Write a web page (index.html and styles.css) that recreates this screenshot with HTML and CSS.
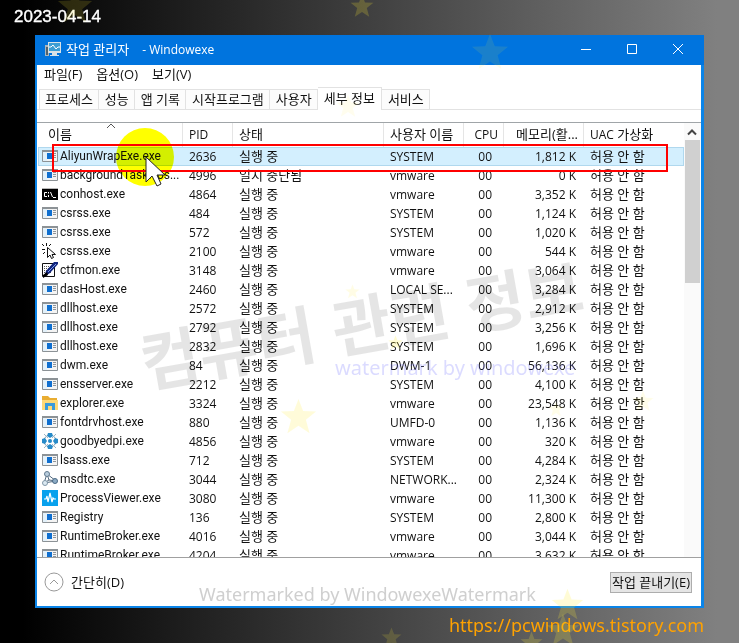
FILE: index.html
```html
<!DOCTYPE html>
<html lang="ko">
<head>
<meta charset="utf-8">
<meta name="viewport" content="width=device-width, initial-scale=1">
<title>작업 관리자 - Windowexe</title>
<link rel="stylesheet" href="styles.css">
</head>
<body>
<svg class="defs" aria-hidden="true">
  <symbol id="i-app" viewBox="0 0 16 16"><path fill="#f4f4f4" stroke="#8c9296" d="M.5 2.500h15v11H.5z"/><path fill="#8c9296" d="M0 2h16v2H0z"/><path fill="#e3f1fa" d="M1 4h4v9H1z"/><path fill="#0f6fd0" d="M5 5h5v6H5z"/><path stroke="#8f9499" d="M11 5.500h3M11 7.500h3M11 9.500h3"/></symbol>
  <symbol id="i-cmd" viewBox="0 0 16 16"><path fill="#000" d="M0 2h16v12H0z"/><path fill="#b8b8b8" d="M0 2h16v1H0z"/><path fill="none" stroke="#fff" d="M5 6.500H2.500v4H5M6.500 6v1.500M6.500 9v2M8.500 6l2 5M11 11.500h3"/></symbol>
  <symbol id="i-click" viewBox="0 0 16 16"><path fill="none" stroke="#111" d="M0 1l2 2M4.500 0v3M9 1L7 3M0 6.500h3M1 11l2-2"/><path fill="#fff" stroke="#111" d="M5.500 4.500v10l2.500-2.500 1.500 3.500 2-1L10 11.500h3.500z"/></symbol>
  <symbol id="i-pen" viewBox="0 0 16 16"><path fill="#fff" stroke="#111" d="M.5 1.500h12v13H.5z"/><path stroke="#555" stroke-dasharray="1 1" d="M2 4.500h8M2 6.500h8M2 8.500h8M2 10.500h8"/><path fill="#12257f" d="M12 0h4v2l-8 9-6 4 2-6z"/><path stroke="#7b9be8" d="M14 2L6 10"/><path fill="#000" d="M1 13l4-3 1 3-5 3z"/></symbol>
  <symbol id="i-folder" viewBox="0 0 16 16"><path fill="#e9ad32" d="M0 1h6l2 2h7v4H0z"/><path fill="#ffd978" d="M0 5h16v10H0z"/><path fill="#3c9bdc" d="M3 8h10v7h-3v-4H6v4H3z"/></symbol>
  <symbol id="i-gear" viewBox="0 0 16 16"><circle cx="8" cy="8" r="6" fill="none" stroke="#7f9caf"/><path fill="#278bc9" d="M6 0h4l1 3-3 2-3-2zM6 16h4l1-3-3-2-3 2zM0 6v4l3 1 2-3-2-3zM16 6v4l-3 1-2-3 2-3z"/><circle cx="8" cy="8" r="2" fill="#278bc9"/><path fill="none" stroke="#9eb6c5" d="M2 1l4 4M14 1l-4 4M2 15l4-4M14 15l-4-4"/></symbol>
  <symbol id="i-net" viewBox="0 0 16 16"><path fill="none" stroke="#536a80" d="M5 3l-3 9 12-2zM5 3l2 6-5 3M7 9l7 1"/><circle cx="5" cy="3" r="2.500" fill="#b9cddd" stroke="#61798e"/><circle cx="3" cy="12" r="2.500" fill="#dbe9f2" stroke="#8097a8"/><circle cx="13" cy="10" r="2.500" fill="#8cabc5" stroke="#4c6a85"/></symbol>
  <symbol id="i-pulse" viewBox="0 0 16 16"><path fill="#08a1ed" d="M0 0h16v16H0z"/><path fill="none" stroke="#fff" stroke-width="1.200" d="M2 9h2l1-3 1 6 2-9 2 9 1-4 1 1h2"/></symbol>
  <symbol id="star" viewBox="0 0 40 40"><path d="M20 1l5 13 14 .5-11 9 4 14.500-12-8-12 8 4-14.500-11-9 14-.5z"/></symbol>
</svg>

<p class="date">2023-04-14</p>

<main class="window">
  <header class="titlebar">
    <svg class="logo" viewBox="0 0 16 15" aria-hidden="true"><path fill="#a9b6bd" d="M0 3h4v11H0z"/><path fill="#52636d" d="M1 5h2v8H1z"/><path fill="#d9e2e6" d="M3 0h13v11H3zM7 11h5v2h2v1H5v-1h2z"/><path fill="#3c9ed4" d="M4 1h11v8H4z"/><path fill="none" stroke="#fff" d="M4 5h2l2-2 3 4 2-2h2"/></svg>
    <h1>작업 관리자</h1><span class="owner">- Windowexe</span>
    <div class="controls">
      <button aria-label="최소화"><svg viewBox="0 0 10 10"><path d="M0 5.500h10"/></svg></button>
      <button aria-label="최대화"><svg viewBox="0 0 10 10"><path d="M.5.5h9v9h-9z"/></svg></button>
      <button aria-label="닫기"><svg viewBox="0 0 10 10"><path d="M0 0l10 10M10 0L0 10"/></svg></button>
    </div>
  </header>
  <nav class="menu"><button>파일(F)</button><button>옵션(O)</button><button>보기(V)</button></nav>
  <div class="tabs" role="tablist">
    <button role="tab">프로세스</button><button role="tab">성능</button><button role="tab">앱 기록</button><button role="tab">시작프로그램</button><button role="tab">사용자</button><button role="tab" aria-selected="true">세부 정보</button><button role="tab">서비스</button>
  </div>
  <section class="list">
    <div class="rows">
      <table>
        <colgroup><col class="c-name"><col class="c-pid"><col class="c-state"><col class="c-user"><col class="c-cpu"><col class="c-mem"><col></colgroup>
        <thead><tr><th class="sorted">이름<svg class="sort" viewBox="0 0 8 4" aria-hidden="true"><path d="M0 4l4-4 4 4"/></svg></th><th class="en">PID</th><th>상태</th><th>사용자 이름</th><th class="en cpu">CPU</th><th class="mem">메모리(활...</th><th><span class="en">UAC</span> 가상화</th></tr></thead>
        <tbody>
          <tr class="selected"><td><svg><use href="#i-app"/></svg>AliyunWrapExe.exe</td><td>2636</td><td>실행 중</td><td>SYSTEM</td><td>00</td><td>1,812 K</td><td>허용 안 함</td></tr>
          <tr><td><svg><use href="#i-app"/></svg>backgroundTaskHos...</td><td>4996</td><td>일시 중단됨</td><td>vmware</td><td>00</td><td>0 K</td><td>허용 안 함</td></tr>
          <tr><td><svg><use href="#i-cmd"/></svg>conhost.exe</td><td>4864</td><td>실행 중</td><td>vmware</td><td>00</td><td>3,352 K</td><td>허용 안 함</td></tr>
          <tr><td><svg><use href="#i-app"/></svg>csrss.exe</td><td>484</td><td>실행 중</td><td>SYSTEM</td><td>00</td><td>1,124 K</td><td>허용 안 함</td></tr>
          <tr><td><svg><use href="#i-app"/></svg>csrss.exe</td><td>572</td><td>실행 중</td><td>SYSTEM</td><td>00</td><td>1,020 K</td><td>허용 안 함</td></tr>
          <tr><td><svg><use href="#i-click"/></svg>csrss.exe</td><td>2100</td><td>실행 중</td><td>vmware</td><td>00</td><td>544 K</td><td>허용 안 함</td></tr>
          <tr><td><svg><use href="#i-pen"/></svg>ctfmon.exe</td><td>3148</td><td>실행 중</td><td>vmware</td><td>00</td><td>3,064 K</td><td>허용 안 함</td></tr>
          <tr><td><svg><use href="#i-app"/></svg>dasHost.exe</td><td>2460</td><td>실행 중</td><td>LOCAL SE...</td><td>00</td><td>3,284 K</td><td>허용 안 함</td></tr>
          <tr><td><svg><use href="#i-app"/></svg>dllhost.exe</td><td>2572</td><td>실행 중</td><td>SYSTEM</td><td>00</td><td>2,912 K</td><td>허용 안 함</td></tr>
          <tr><td><svg><use href="#i-app"/></svg>dllhost.exe</td><td>2792</td><td>실행 중</td><td>SYSTEM</td><td>00</td><td>3,256 K</td><td>허용 안 함</td></tr>
          <tr><td><svg><use href="#i-app"/></svg>dllhost.exe</td><td>2832</td><td>실행 중</td><td>SYSTEM</td><td>00</td><td>1,696 K</td><td>허용 안 함</td></tr>
          <tr><td><svg><use href="#i-app"/></svg>dwm.exe</td><td>84</td><td>실행 중</td><td>DWM-1</td><td>00</td><td>56,136 K</td><td>허용 안 함</td></tr>
          <tr><td><svg><use href="#i-app"/></svg>ensserver.exe</td><td>2212</td><td>실행 중</td><td>SYSTEM</td><td>00</td><td>4,100 K</td><td>허용 안 함</td></tr>
          <tr><td><svg><use href="#i-folder"/></svg>explorer.exe</td><td>3324</td><td>실행 중</td><td>vmware</td><td>00</td><td>23,548 K</td><td>허용 안 함</td></tr>
          <tr><td><svg><use href="#i-app"/></svg>fontdrvhost.exe</td><td>880</td><td>실행 중</td><td>UMFD-0</td><td>00</td><td>1,136 K</td><td>허용 안 함</td></tr>
          <tr><td><svg><use href="#i-gear"/></svg>goodbyedpi.exe</td><td>4856</td><td>실행 중</td><td>vmware</td><td>00</td><td>320 K</td><td>허용 안 함</td></tr>
          <tr><td><svg><use href="#i-app"/></svg>lsass.exe</td><td>712</td><td>실행 중</td><td>SYSTEM</td><td>00</td><td>4,284 K</td><td>허용 안 함</td></tr>
          <tr><td><svg><use href="#i-net"/></svg>msdtc.exe</td><td>3044</td><td>실행 중</td><td>NETWORK...</td><td>00</td><td>2,324 K</td><td>허용 안 함</td></tr>
          <tr><td><svg><use href="#i-pulse"/></svg>ProcessViewer.exe</td><td>3080</td><td>실행 중</td><td>vmware</td><td>00</td><td>11,300 K</td><td>허용 안 함</td></tr>
          <tr><td><svg><use href="#i-app"/></svg>Registry</td><td>136</td><td>실행 중</td><td>SYSTEM</td><td>00</td><td>2,800 K</td><td>허용 안 함</td></tr>
          <tr><td><svg><use href="#i-app"/></svg>RuntimeBroker.exe</td><td>4016</td><td>실행 중</td><td>vmware</td><td>00</td><td>3,044 K</td><td>허용 안 함</td></tr>
          <tr><td><svg><use href="#i-app"/></svg>RuntimeBroker.exe</td><td>4204</td><td>실행 중</td><td>vmware</td><td>00</td><td>3,632 K</td><td>허용 안 함</td></tr>
        </tbody>
      </table>
    </div>
    <div class="scroll"><svg class="up" viewBox="0 0 8 5" aria-hidden="true"><path d="M0 4.500l4-4 4 4"/></svg><div class="thumb"></div></div>
  </section>
  <footer class="actions">
    <button class="fewer"><svg viewBox="0 0 20 20" aria-hidden="true"><circle cx="10" cy="10" r="9"/><path d="M6 12l4-4 4 4"/></svg>간단히(D)</button>
    <button class="end">작업 끝내기(E)</button>
  </footer>
</main>

<a class="site" href="https://pcwindows.tistory.com">https://pcwindows.tistory.com</a>

<div class="mark mark-topic">컴퓨터 관련 정보</div>
<div class="mark mark-by">watermark by windowexe</div>
<div class="mark mark-app">Watermarked by WindowexeWatermark</div>
<svg class="overlay stars" width="739" height="643" aria-hidden="true">
  <g fill="#ffee33">
    <use href="#star" x="57" y="-12" width="36" height="36" opacity=".15"/>
    <use href="#star" x="350" y="-6" width="24" height="24" opacity=".2"/>
    <use href="#star" x="471" y="33" width="38" height="38" opacity=".1"/>
    <use href="#star" x="336" y="94" width="24" height="24" opacity=".08"/>
    <use href="#star" x="345" y="284" width="15" height="15" opacity=".12"/>
    <use href="#star" x="388" y="335" width="15" height="15" opacity=".22"/>
    <use href="#star" x="280" y="398" width="37" height="37" opacity=".18"/>
    <use href="#star" x="548" y="401" width="16" height="16" opacity=".1"/>
    <use href="#star" x="632" y="390" width="22" height="22" opacity=".1"/>
    <use href="#star" x="551" y="588" width="33" height="33" opacity=".2"/>
    <use href="#star" x="546" y="613" width="34" height="34" opacity=".2"/>
    <use href="#star" x="381" y="627" width="21" height="21" opacity=".15"/>
    <use href="#star" x="520" y="631" width="23" height="23" opacity=".2"/>
  </g>
</svg>
<svg class="overlay spot" width="60" height="60" viewBox="0 0 60 60" aria-hidden="true"><circle cx="30" cy="30" r="29" fill="#ff0"/></svg>
<div class="highlight"></div>
<svg class="overlay pointer" width="22" height="32" viewBox="0 0 22 32" aria-hidden="true"><path fill="#fff" stroke="#222" d="M1 1v25l6-6 5 10 4-2-4-9h8z"/></svg>
</body>
</html>
```
FILE: styles.css
```css
* { box-sizing: border-box; }
body {
  margin: 0;
  height: 100vh;
  min-height: 400px;
  display: flex;
  flex-direction: column;
  position: relative;
  overflow: hidden;
  padding: 0 35px;
  background: linear-gradient(90deg, #000 3%, #808080 97%);
  font: 13px/19px "Open Sans", "Noto Sans CJK KR", sans-serif;
  color: #111;
}
button { font: inherit; color: inherit; border: 0; padding: 0; background: none; white-space: nowrap; }
.defs { position: absolute; width: 0; height: 0; }
.date {
  margin: 0 0 0 -21px;
  flex: 0 0 35px;
  font: 17px/34px "Liberation Sans", sans-serif;
  color: #fff;
  -webkit-text-stroke: thin #fff;
}
.window {
  flex: 1;
  min-height: 0;
  display: flex;
  flex-direction: column;
  background: #fff;
  border: solid #0a84e8;
  border-width: 0 3px 2px 2px;
}
.titlebar {
  flex: 0 0 30px;
  display: flex;
  align-items: center;
  margin: 0 -3px 0 -2px;
  padding: 0 3px 2px 10px;
  background: #0074de;
  color: #fff;
}
.logo { width: 16px; height: 15px; margin-right: 5px; }
.titlebar h1 { margin: 0 13px 0 0; font: inherit; }
.owner { font-size: 12px; }
.controls { margin-left: auto; display: flex; }
.controls button { width: 46px; height: 28px; display: grid; place-items: center; }
.controls svg { width: 10px; height: 10px; fill: none; stroke: #fff; overflow: visible; }
.menu { flex: 0 0 22px; display: flex; align-items: flex-start; gap: 14px; padding-left: 7px; line-height: 18px; }
.tabs {
  flex: 0 0 23px;
  display: flex;
  align-items: flex-end;
  padding-left: 2px;
  box-shadow: inset 0 -1px #e2e2e2;
}
.tabs button {
  height: 21px;
  padding: 0 5px 2px 6px;
  border: 1px solid #e2e2e2;
  border-left-width: 0;
  background: #fcfcfc;
  line-height: 16px;
}
.tabs button:first-child { border-left-width: 1px; padding-left: 5px; }
.tabs button[aria-selected="true"] { height: 23px; padding: 0 6px 2px; background: #fff; border-bottom: 0; }
.list {
  flex: 1;
  min-height: 0;
  display: flex;
  margin-top: 12px;
  border-top: 1px solid #a0a5a8;
  border-bottom: 1px solid #a0a0a0;
}
.rows { flex: 1; min-width: 0; overflow: hidden; padding-left: 1px; }
table { width: 100%; table-layout: fixed; border-collapse: separate; border-spacing: 0; }
.c-name { width: 145px; }
.c-pid { width: 50px; }
.c-state { width: 151px; }
.c-user { width: 80px; }
.c-cpu { width: 40px; }
.c-mem { width: 80px; }
th, td { padding: 0 6px; text-align: left; font-weight: 400; white-space: nowrap; overflow: hidden; }
th { height: 24px; padding-bottom: 2px; border-right: 1px solid #e5e5e5; }
th:last-child { border-right: 0; }
.sorted { position: relative; padding-left: 10px; }
.sort { position: absolute; top: 1px; left: 69px; width: 8px; height: 4px; fill: none; stroke: #555; overflow: visible; }
.en { font-size: 12px; }
.mem, td:nth-child(6) { text-align: right; }
.cpu, td:nth-child(5) { text-align: right; }
.mem, .cpu { padding-right: 5px; }
td { height: 19px; font-size: 12px; line-height: 17px; }
td:first-child { padding: 0 0 0 4px; font-family: Roboto, sans-serif; }
td:nth-child(5) { padding-right: 12px; }
td:nth-child(6) { padding-right: 8px; }
td:nth-child(3), td:nth-child(7) { font-size: 13px; }
td svg { width: 16px; height: 16px; margin-right: 2px; vertical-align: -4px; }
.selected { background: #d3effe; outline: 1px solid #b0d8ee; outline-offset: -1px; }
.scroll { flex: 0 0 17px; display: flex; flex-direction: column; background: #fafafa; }
.up { width: 8px; height: 5px; margin: 7px 4px 5px; fill: none; stroke: #444; stroke-width: 2; overflow: visible; }
.thumb { height: 33%; margin: 0 1px; background: #d0d0d0; }
.actions { flex: 0 0 48px; display: flex; align-items: center; justify-content: space-between; padding: 0 9px 0 7px; }
.fewer { display: flex; align-items: center; gap: 7px; }
.fewer svg { width: 20px; height: 20px; fill: none; stroke: #999; }
.end { height: 21px; padding: 0 1px 2px; border: 1px solid #adadad; background: #e5e5e5; line-height: 18px; }
.site {
  flex: 0 0 35px;
  align-self: flex-end;
  font: 18px/34px "Noto Sans", sans-serif;
  color: #ffa200;
  text-decoration: none;
}
.mark, .overlay, .highlight { position: absolute; pointer-events: none; white-space: nowrap; }
.mark-topic {
  left: 137px;
  top: 276px;
  font: 700 64px/90px "Noto Sans CJK KR", sans-serif;
  color: rgba(0, 0, 0, .1);
  transform: rotate(-10deg);
}
.mark-by { left: 335px; top: 354px; font: 20px/28px "Noto Sans", sans-serif; color: rgba(90, 90, 255, .22); }
.mark-app { left: 199px; top: 580px; font: 18px/28px "Noto Sans", sans-serif; color: #cfcfcf; }
.stars { left: 0; top: 0; }
.spot { left: 115px; top: 127px; mix-blend-mode: multiply; }
.highlight { left: 52px; top: 144px; width: 616px; height: 28px; border: 2px solid #f00; }
.pointer { left: 145px; top: 156px; }
```
